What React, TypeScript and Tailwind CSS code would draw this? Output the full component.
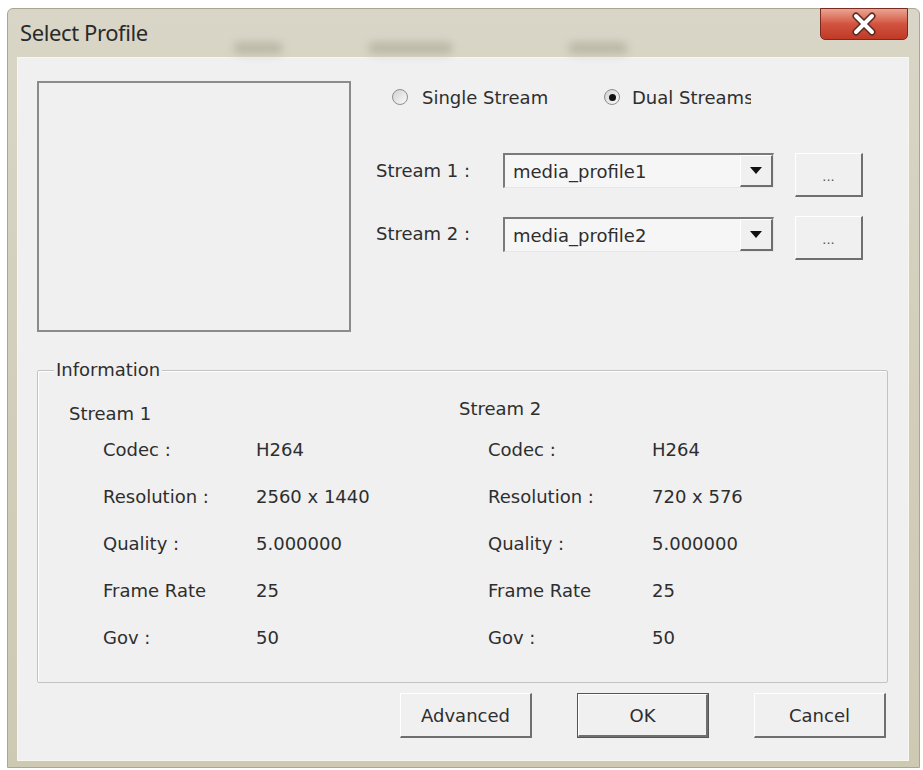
import React from 'react';

const ui = "font-['DejaVu_Sans',sans-serif] text-[18px] text-[#2e2e2e]";

function Radio({ checked }: { checked?: boolean }) {
  return (
    <span className="w-[16px] h-[16px] rounded-full border border-[#8d8d8d] bg-gradient-to-br from-[#d2d2d2] to-[#fbfbfb] flex items-center justify-center shrink-0">
      {checked && <span className="w-[7px] h-[7px] rounded-full bg-[#111]" />}
    </span>
  );
}

function Combo({ value }: { value: string }) {
  return (
    <div className="w-[271px] h-[35px] flex border-t-2 border-l-2 border-[#7a7a7a] border-b border-r border-b-[#e6e6e6] border-r-[#e6e6e6]">
      <div className="flex-1 bg-[#f6f6f6] flex items-center pl-[8px]">{value}</div>
      <div className="w-[33px] bg-[#f0f0f0] border-r-2 border-b-2 border-[#6e6e6e] border-t border-l border-t-white border-l-white flex items-center justify-center">
        <svg width="12" height="7" viewBox="0 0 12 7">
          <path d="M0 0 L12 0 L6 7 Z" fill="#111" />
        </svg>
      </div>
    </div>
  );
}

function Dots() {
  return (
    <button className="w-[68px] h-[44px] ml-[21px] bg-[#f0f0f0] border-t border-l border-white border-r-2 border-b-2 border-r-[#6f6f6f] border-b-[#6f6f6f] flex items-center justify-center pt-[4px] text-[13px] text-[#555]">
      ...
    </button>
  );
}

function DialogButton({ label, primary }: { label: string; primary?: boolean }) {
  return (
    <button
      className={
        primary
          ? 'w-[132px] h-[45px] border border-[#555] bg-[#f0f0f0] flex items-center justify-center'
          : 'w-[132px] h-[45px] bg-[#f0f0f0] border-t border-l border-white border-r-2 border-b-2 border-r-[#6f6f6f] border-b-[#6f6f6f] flex items-center justify-center'
      }
    >
      {primary ? (
        <span className="w-full h-full border-t border-l border-white border-r-2 border-b-2 border-r-[#6f6f6f] border-b-[#6f6f6f] flex items-center justify-center">
          {label}
        </span>
      ) : (
        label
      )}
    </button>
  );
}

const rows1 = [
  ['Codec :', 'H264'],
  ['Resolution :', '2560 x 1440'],
  ['Quality :', '5.000000'],
  ['Frame Rate', '25'],
  ['Gov :', '50'],
];

const rows2 = [
  ['Codec :', 'H264'],
  ['Resolution :', '720 x 576'],
  ['Quality :', '5.000000'],
  ['Frame Rate', '25'],
  ['Gov :', '50'],
];

export default function App() {
  return (
    <div className={`w-[923px] h-[770px] bg-white pl-[7px] pt-[8px] overflow-hidden ${ui}`}>
      <div className="w-[913px] h-[760px] bg-gradient-to-b from-[#d9d6c7] via-[#d2cebb] to-[#cdc9b3] border border-[#aaa690] rounded-t-[6px] flex flex-col">
        {/* title bar */}
        <div className="h-[49px] flex items-start">
          <div className="pl-[12px] pt-[7px] text-[22px] text-[#2a2a2a] font-['Noto_Sans',sans-serif] tracking-[-0.4px]">
            Select Profile
          </div>
          <div className="flex-1 h-full flex items-end pb-[4px]">
            <span className="ml-[85px] w-[50px] h-[12px] bg-[#a9a594] rounded-full blur-[4px] opacity-60" />
            <span className="ml-[85px] w-[85px] h-[12px] bg-[#a9a594] rounded-full blur-[4px] opacity-60" />
            <span className="ml-[115px] w-[60px] h-[12px] bg-[#a9a594] rounded-full blur-[4px] opacity-60" />
          </div>
          <div className="w-[88px] h-[32px] -mt-[1px] mr-[11px] rounded-b-[5px] border border-[#7b2b1f] bg-gradient-to-b from-[#e9a493] via-[#d2533f] to-[#bf3a27] flex items-center justify-center">
            <svg width="26" height="24" viewBox="0 0 26 24">
              <path d="M5 4 L21 20 M21 4 L5 20" stroke="#5a2a22" strokeWidth="7" strokeLinecap="round" />
              <path d="M5 4 L21 20 M21 4 L5 20" stroke="#fff" strokeWidth="4" strokeLinecap="round" />
            </svg>
          </div>
        </div>

        {/* client area */}
        <div className="flex-1 ml-[10px] mr-[11px] mb-[7px] bg-[#f0f0f0] shadow-[0_0_0_1px_#f7f6ef] flex flex-col">
          <div className="flex pt-[23px] pl-[19px]">
            <div className="w-[314px] h-[251px] border-2 border-[#8b8b8b]" />
            <div className="ml-[25px] flex flex-col">
              <div className="h-[32px] flex items-center pl-[16px]">
                <div className="w-[212px] flex items-center gap-[14px]">
                  <Radio />
                  <span>Single Stream</span>
                </div>
                <div className="flex items-center gap-[12px]">
                  <Radio checked />
                  <span className="w-[119px] overflow-hidden whitespace-nowrap">Dual Streams</span>
                </div>
              </div>
              <div className="mt-[40px] flex items-start">
                <span className="w-[127px] pt-[4px]">Stream 1 :</span>
                <Combo value="media_profile1" />
                <Dots />
              </div>
              <div className="mt-[19px] flex items-start">
                <span className="w-[127px] pt-[4px]">Stream 2 :</span>
                <div className="mt-[1px]">
                  <Combo value="media_profile2" />
                </div>
                <Dots />
              </div>
            </div>
          </div>

          {/* information group */}
          <div className="relative mt-[38px] ml-[19px] w-[851px] h-[313px] border border-[#c3c3c3] shadow-[inset_1px_1px_0_#ffffff] rounded-[2px] grid grid-cols-[421px_1fr]">
            <span className="absolute -top-[12px] left-[16px] px-[2px] bg-[#f0f0f0] leading-[22px]">Information</span>
            <div className="flex flex-col pt-[31px]">
              <div className="h-[24px] pl-[31px] leading-[24px]">Stream 1</div>
              {rows1.map(([k, v]) => (
                <div key={k} className="h-[47px] flex items-center pl-[65px]">
                  <span className="w-[153px]">{k}</span>
                  <span>{v}</span>
                </div>
              ))}
            </div>
            <div className="flex flex-col pt-[26px]">
              <div className="h-[24px] leading-[24px]">Stream 2</div>
              <div className="mt-[5px]">
                {rows2.map(([k, v]) => (
                  <div key={k} className="h-[47px] flex items-center pl-[29px]">
                    <span className="w-[164px]">{k}</span>
                    <span>{v}</span>
                  </div>
                ))}
              </div>
            </div>
          </div>

          <div className="mt-[10px] pl-[382px] flex gap-[45px]">
            <DialogButton label="Advanced" />
            <DialogButton label="OK" primary />
            <DialogButton label="Cancel" />
          </div>
        </div>
      </div>
    </div>
  );
}
